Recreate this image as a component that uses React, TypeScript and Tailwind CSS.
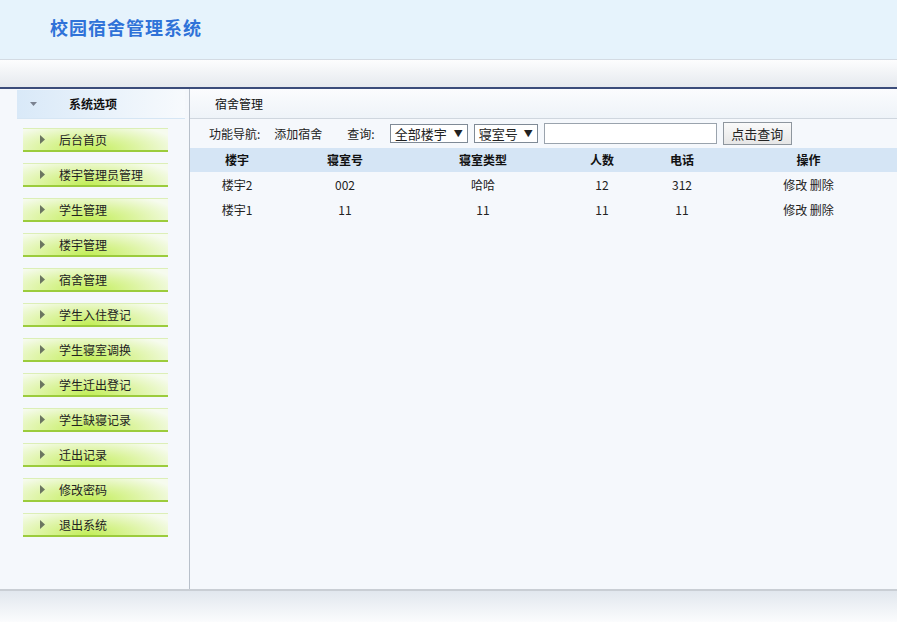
import React from "react";

const MENU = [
  "后台首页",
  "楼宇管理员管理",
  "学生管理",
  "楼宇管理",
  "宿舍管理",
  "学生入住登记",
  "学生寝室调换",
  "学生迁出登记",
  "学生缺寝记录",
  "迁出记录",
  "修改密码",
  "退出系统",
];

const ROWS = [
  { b: "楼宇2", no: "002", type: "哈哈", n: "12", tel: "312" },
  { b: "楼宇1", no: "11", type: "11", n: "11", tel: "11" },
];

const COLS = ["w-[94px]", "w-[122px]", "w-[154px]", "w-[84px]", "w-[76px]", "flex-1"];

function Arrow() {
  return (
    <svg width="5" height="9" viewBox="0 0 5 9" className="shrink-0">
      <path d="M0 0 L5 4.5 L0 9 Z" fill="#6b7560" />
    </svg>
  );
}

export default function App() {
  return (
    <div
      className="flex h-[622px] w-[897px] flex-col overflow-hidden bg-[#f5f8fc] text-[12px] text-[#222]"
      style={{ fontFamily: '"Noto Sans CJK SC", "Noto Sans", sans-serif' }}
    >
      <header className="flex h-[59px] shrink-0 items-center bg-[#e6f3fc] pb-[4px] pl-[50px]">
        <h1 className="text-[18px] font-bold tracking-[1px] text-[#2f72d8]">校园宿舍管理系统</h1>
      </header>
      <div className="h-[28px] shrink-0 border-t border-[#d4dbe3] bg-[linear-gradient(#fdfdfe,#e5e9ee)]" />
      <div className="h-[2px] shrink-0 bg-[#3b4c7a]" />

      <div className="flex min-h-0 flex-1">
        <aside className="flex w-[190px] shrink-0 flex-col border-r border-[#b8c0ca] bg-[#f5f8fc]">
          <div className="ml-[17px] mr-[4px] mt-[1px] flex h-[29px] items-center border-b border-[#d6e6f4] bg-[linear-gradient(90deg,#d9e9f8,#f7fafd)]">
            <svg width="7" height="4" viewBox="0 0 7 4" className="ml-[13px]">
              <path d="M0 0 H7 L3.5 4 Z" fill="#7a8290" />
            </svg>
            <span className="ml-[32px] font-bold text-[#111]">系统选项</span>
          </div>
          <nav className="flex flex-col pt-[8px]">
            {MENU.map((m) => (
              <div key={m} className="h-[35px] pt-[1px]">
                <div className="ml-[23px] flex h-[24px] w-[145px] items-center border-t border-b-2 border-t-[#dcefb6] border-b-[#9ccc3c] bg-[radial-gradient(ellipse_65%_130%_at_45%_100%,#c2ee58,#dcf4a0_50%,#f6fbee_100%)]">
                  <span className="ml-[17px]">
                    <Arrow />
                  </span>
                  <span className="ml-[14px] text-[12px] text-[#222]">{m}</span>
                </div>
              </div>
            ))}
          </nav>
        </aside>

        <main className="flex min-w-0 flex-1 flex-col">
          <div className="flex h-[30px] shrink-0 items-center border-b border-[#cfd6de] bg-[linear-gradient(#fbfcfe,#eef3f8)] pl-[25px] text-[#111]">
            宿舍管理
          </div>
          <div className="flex h-[29px] shrink-0 items-center pl-[19px] text-[#222]">
            <span>功能导航:</span>
            <span className="ml-[14px]">添加宿舍</span>
            <span className="ml-[25px]">查询:</span>
            <div className="ml-[15px] flex h-[19px] w-[78px] items-center justify-between border border-[#7f8a96] bg-white pl-[4px] pr-[4px]">
              <span className="text-[13px]">全部楼宇</span>
              <span className="text-[9px]">▼</span>
            </div>
            <div className="ml-[6px] flex h-[19px] w-[64px] items-center justify-between border border-[#7f8a96] bg-white pl-[4px] pr-[4px]">
              <span className="text-[13px]">寝室号</span>
              <span className="text-[9px]">▼</span>
            </div>
            <div className="ml-[6px] h-[21px] w-[173px] border border-[#9aa3ad] bg-white" />
            <button className="ml-[6px] h-[23px] w-[69px] border border-[#8e969e] bg-[linear-gradient(#fafafa,#e6e6e6)] text-[13px] text-[#222]">
              点击查询
            </button>
          </div>
          <div className="flex h-[24px] shrink-0 items-center bg-[#d5e5f5] font-bold text-[#111]">
            {["楼宇", "寝室号", "寝室类型", "人数", "电话", "操作"].map((h, i) => (
              <div key={h} className={`${COLS[i]} text-center`}>
                {h}
              </div>
            ))}
          </div>
          {ROWS.map((r) => (
            <div key={r.b} className="flex h-[25px] shrink-0 items-center text-[#222]">
              <div className={`${COLS[0]} text-center`}>{r.b}</div>
              <div className={`${COLS[1]} text-center`}>{r.no}</div>
              <div className={`${COLS[2]} text-center`}>{r.type}</div>
              <div className={`${COLS[3]} text-center`}>{r.n}</div>
              <div className={`${COLS[4]} text-center`}>{r.tel}</div>
              <div className={`${COLS[5]} text-center`}>修改 删除</div>
            </div>
          ))}
        </main>
      </div>

      <div className="h-[33px] shrink-0 border-t-2 border-[#c9ced4] bg-[linear-gradient(#e1e7ee,#fbfcfd)]" />
    </div>
  );
}
